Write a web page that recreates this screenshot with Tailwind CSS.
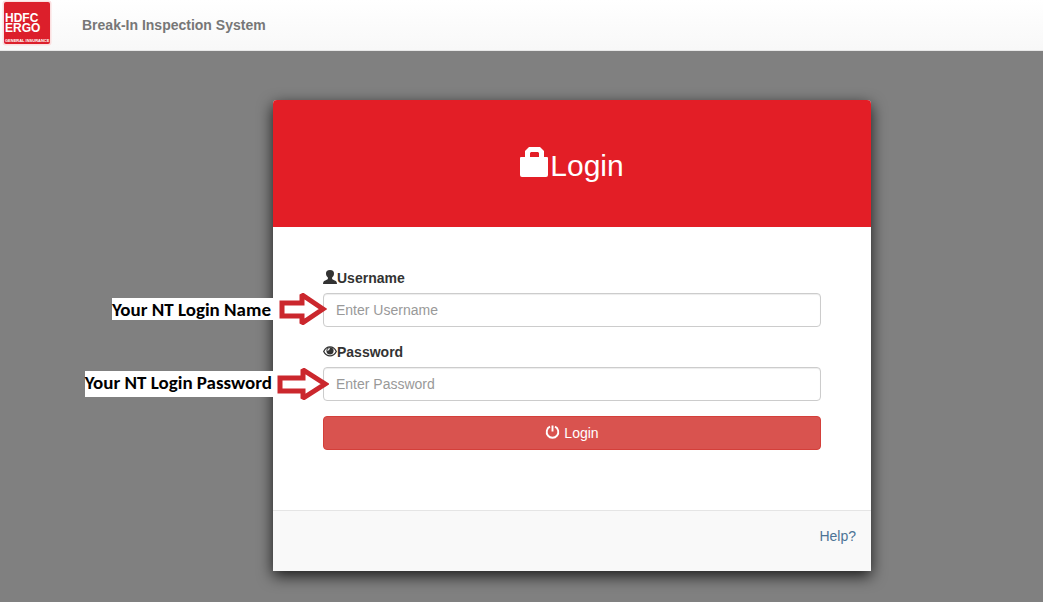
<!DOCTYPE html>
<html lang="en">
<head>
   <meta charset="UTF-8">
   <meta name="viewport" content="width=device-width, initial-scale=1.0">
   <title>Break-In Inspection System</title>
   <script src="https://cdn.jsdelivr.net/npm/@tailwindcss/browser@4"></script>
</head>
<body class="min-h-screen bg-[#808080] font-['Liberation_Sans',Arial,sans-serif] text-sm text-[#333]">
   <!-- Navbar -->
   <header class="flex items-center h-[51px] pl-[2px] gap-[30px] bg-linear-to-b from-white to-[#f8f8f8] border-b border-[#e7e7e7]">
      <svg class="w-[50px] h-[46px] mb-1" viewBox="0 0 50 46" role="img" aria-label="HDFC ERGO General Insurance">
         <rect x="0.5" y="0.5" width="49" height="45" rx="3" fill="#fbdfe0"/>
         <rect x="2" y="2" width="46" height="42" rx="2" fill="#dc1f2b"/>
         <g fill="#fff" font-family="Liberation Sans" font-weight="bold">
            <text x="3" y="22" font-size="12">HDFC</text>
            <text x="3" y="32" font-size="12">ERGO</text>
            <text x="3" y="42" font-size="4">GENERAL INSURANCE</text>
         </g>
      </svg>
      <span class="text-sm font-bold text-[#777]">Break-In Inspection System</span>
   </header>

   <!-- Login dialog -->
   <div class="pl-[101px] pt-[49px] pb-[31px]">
      <main class="w-full max-w-[598px] mx-auto rounded-t bg-white shadow-[0_5px_15px_rgba(0,0,0,0.8)]">
         <div class="flex justify-center items-center h-[127px] rounded-t bg-[#e31e26] text-white">
            <svg class="w-[30px] h-8 mb-1" viewBox="0 0 30 32" fill="currentColor" aria-hidden="true">
               <path fill-rule="evenodd" d="M5 11V5l4-4h11l4 4v6h3q1 0 1 1v17q0 2-2 2H2q-2 0-2-2V12q0-1 1-1zM10 11h9V7l-1-1h-7l-1 1z"/>
            </svg>
            <h1 class="text-[30px] leading-8 pt-1">Login</h1>
         </div>

         <form class="px-[50px] pt-[41px] pb-[60px]">
            <div class="mb-[15px]">
               <label for="username" class="flex items-center h-5 mb-[5px] font-bold">
                  <svg class="w-[14px] h-[14px] mb-[2px]" viewBox="0 0 14 14" fill="currentColor" aria-hidden="true">
                     <path d="M7 0c2.800 0 4.200 1.400 4 3.800-.1 1.700-.8 3-1.900 3.800v1.200c0 .6 1.200 1 2.700 1.600 1.700.7 2 1.300 2.200 3.600H0c.2-2.300.5-2.900 2.200-3.600C3.700 9.800 4.900 9.400 4.900 8.800V7.600C3.900 6.800 3.100 5.500 3 3.800 2.800 1.400 4.200 0 7 0z"/>
                  </svg>
                  Username
               </label>
               <div class="relative">
                  <input id="username" type="text" placeholder="Enter Username" class="w-full h-[34px] px-3 rounded border border-[#ccc] bg-white shadow-[inset_0_1px_1px_rgba(0,0,0,0.075)] placeholder:text-[#999]">
                  <!-- Callout -->
                  <div class="absolute top-0 right-full h-8 -mr-1 flex items-center gap-[6px]">
                     <span class="h-[22px] pr-[2px] bg-white font-[Carlito,Calibri,'Open_Sans',sans-serif] text-[19px] leading-6 font-bold text-black whitespace-nowrap">Your NT Login Name</span>
                     <svg class="w-12 h-8" viewBox="0 0 48 32" aria-hidden="true">
                        <path d="M3 10h20V3l1-.5L44 16 24 29.500l-1-.5v-6H3z" fill="#fff" stroke="#cb272d" stroke-width="5" stroke-linejoin="miter"/>
                     </svg>
                  </div>
               </div>
            </div>

            <div class="mb-[15px]">
               <label for="password" class="flex items-center h-5 mb-[5px] font-bold">
                  <svg class="w-[14px] h-[14px]" viewBox="0 0 14 14" aria-hidden="true">
                     <path d="M.7 6.500C3.700.4 10.300.4 13.300 6.500 10.300 12.400 3.700 12.400 .7 6.500z" fill="#fff" stroke="#333" stroke-width="1.300"/>
                     <circle cx="7" cy="5.800" r="3.600" fill="#333"/>
                     <path d="M4.800 5.800q.1-1.900 2-2.200" fill="none" stroke="#fff" stroke-width="1.100"/>
                  </svg>
                  Password
               </label>
               <div class="relative">
                  <input id="password" type="password" placeholder="Enter Password" class="w-full h-[34px] px-3 rounded border border-[#ccc] bg-white shadow-[inset_0_1px_1px_rgba(0,0,0,0.075)] placeholder:text-[#999]">
                  <!-- Callout -->
                  <div class="absolute top-0 right-full h-[34px] -mr-[6px] flex items-center gap-1">
                     <span class="h-[26px] pr-px bg-white font-[Carlito,Calibri,'Open_Sans',sans-serif] text-[19px] leading-6 font-bold text-black whitespace-nowrap">Your NT Login Password</span>
                     <svg class="w-[52px] h-8" viewBox="0 0 52 32" aria-hidden="true">
                        <path d="M3 10h23V3l1-.5L48 16 27 29.500l-1-.5v-6H3z" fill="#fff" stroke="#cb272d" stroke-width="5" stroke-linejoin="miter"/>
                     </svg>
                  </div>
               </div>
            </div>

            <button type="submit" class="flex justify-center items-center gap-1 w-full h-[34px] rounded border border-[#d43f3a] bg-[#d9534f] text-white">
               <svg class="w-[15px] h-[14px] mb-[2px]" viewBox="0 0 14 14" fill="none" stroke="currentColor" stroke-width="1.900" aria-hidden="true">
                  <path d="M4.500 1.700a5.800 5.800 0 1 0 5 0M7 .5v6"/>
               </svg>
               Login
            </button>
         </form>

         <footer class="flex justify-end h-[61px] p-[15px] border-t border-[#e5e5e5] bg-[#f9f9f9]">
            <a href="#" class="text-[#4d7496]">Help?</a>
         </footer>
      </main>
   </div>
</body>
</html>
